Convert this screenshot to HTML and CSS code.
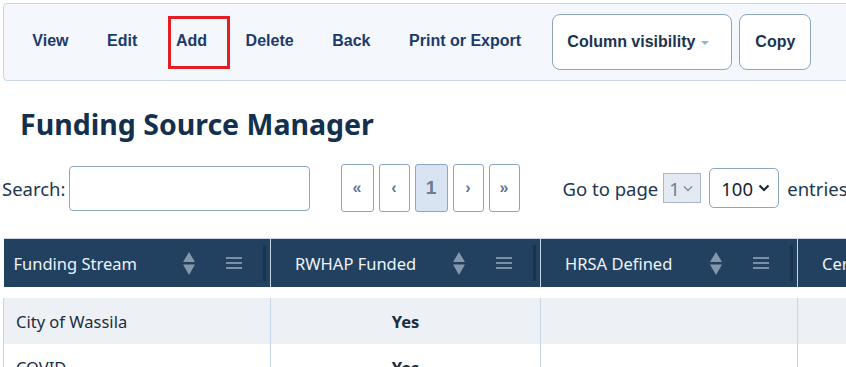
FILE: index.html
```html
<!DOCTYPE html>
<html lang="en">
<head>
    <meta charset="UTF-8">
    <meta name="viewport" content="width=device-width, initial-scale=1.0">
    <title>Funding Source Manager</title>
    <link rel="stylesheet" href="styles.css">
</head>
<body>
    <div class="page">
        <div class="toolbar">
            <button class="tool-button">View</button>
            <button class="tool-button">Edit</button>
            <button class="tool-button add-button">Add<span class="highlight"></span></button>
            <button class="tool-button">Delete</button>
            <button class="tool-button">Back</button>
            <button class="tool-button">Print or Export</button>
            <button class="box-button colvis-button">Column visibility <span class="caret"></span></button>
            <button class="box-button copy-button">Copy</button>
        </div>

        <h1 class="page-title">Funding Source Manager</h1>

        <div class="controls">
            <label class="search-label">Search:</label>
            <input class="search-input" type="text">
            <div class="pager">
                <span class="page-btn wide">&laquo;</span>
                <span class="page-btn">&lsaquo;</span>
                <span class="page-btn wide active">1</span>
                <span class="page-btn">&rsaquo;</span>
                <span class="page-btn">&raquo;</span>
            </div>
            <span class="goto-label">Go to page</span>
            <div class="mini-select">1
                <svg width="10" height="7" viewBox="0 0 10 7"><path d="M1 1.5 L5 5.5 L9 1.5" fill="none" stroke="#7a8ca0" stroke-width="1.4"/></svg>
            </div>
            <div class="length-select">100
                <svg width="12" height="8" viewBox="0 0 12 8"><path d="M1.5 1.5 L6 6 L10.5 1.5" fill="none" stroke="#1b2733" stroke-width="2.2"/></svg>
            </div>
            <span class="entries-label">entries</span>
        </div>

        <table class="data-table">
            <colgroup>
                <col style="width:267px">
                <col style="width:270px">
                <col style="width:257px">
                <col style="width:300px">
            </colgroup>
            <thead>
                <tr>
                    <th class="first">
                        <div class="th-inner">
                            <span class="th-text">Funding Stream</span>
                            <svg class="sort-icon" width="12" height="23" viewBox="0 0 12 23"><path d="M6 0 L12 10 L0 10 Z M0 12.5 L12 12.5 L6 23 Z" fill="#8797ab"/></svg>
                            <svg class="menu-icon" width="16" height="12" viewBox="0 0 16 12"><path d="M0 1 H16 M0 6 H16 M0 11 H16" stroke="#7d8fa4" stroke-width="2"/></svg>
                            <span class="resizer"></span>
                        </div>
                    </th>
                    <th>
                        <div class="th-inner">
                            <span class="th-text">RWHAP Funded</span>
                            <svg class="sort-icon" width="12" height="23" viewBox="0 0 12 23"><path d="M6 0 L12 10 L0 10 Z M0 12.5 L12 12.5 L6 23 Z" fill="#8797ab"/></svg>
                            <svg class="menu-icon" width="16" height="12" viewBox="0 0 16 12"><path d="M0 1 H16 M0 6 H16 M0 11 H16" stroke="#7d8fa4" stroke-width="2"/></svg>
                            <span class="resizer"></span>
                        </div>
                    </th>
                    <th>
                        <div class="th-inner">
                            <span class="th-text">HRSA Defined</span>
                            <svg class="sort-icon" width="12" height="23" viewBox="0 0 12 23"><path d="M6 0 L12 10 L0 10 Z M0 12.5 L12 12.5 L6 23 Z" fill="#8797ab"/></svg>
                            <svg class="menu-icon" width="16" height="12" viewBox="0 0 16 12"><path d="M0 1 H16 M0 6 H16 M0 11 H16" stroke="#7d8fa4" stroke-width="2"/></svg>
                            <span class="resizer"></span>
                        </div>
                    </th>
                    <th>
                        <div class="th-inner">
                            <span class="th-text">Certified</span>
                        </div>
                    </th>
                </tr>
            </thead>
            <tbody>
                <tr class="gap-row"><td colspan="4"></td></tr>
                <tr class="odd">
                    <td>City of Wassila</td>
                    <td class="center bold">Yes</td>
                    <td></td>
                    <td></td>
                </tr>
                <tr>
                    <td>COVID</td>
                    <td class="center bold">Yes</td>
                    <td></td>
                    <td></td>
                </tr>
            </tbody>
        </table>
    </div>
</body>
</html>
```

FILE: styles.css
```css
html, body {
    margin: 0;
    overflow: hidden;
    background: #ffffff;
}
body {
    font-family: "Noto Sans", "Open Sans", sans-serif;
    font-size: 16px;
    color: #1f3550;
}
.page {
    padding: 3px 0 0 3px;
    width: 1200px;
}

/* toolbar */
.toolbar {
    display: flex;
    align-items: stretch;
    height: 56px;
    padding: 10px 9px;
    background-color: #f4f7fc;
    border: 1px solid #c8d5e6;
    border-radius: 4px;
}
.tool-button {
    position: relative;
    background: none;
    border: none;
    padding: 0 19.3px 2px;
    font-family: "Liberation Sans", Arial, sans-serif;
    font-weight: bold;
    font-size: 16px;
    color: #1d3a6b;
    cursor: pointer;
}
.highlight {
    position: absolute;
    left: 11px;
    top: 2px;
    width: 62px;
    height: 53px;
    box-sizing: border-box;
    border: 3px solid #e41e25;
}
.box-button {
    background-color: #ffffff;
    border: 1px solid #8ea5c0;
    border-radius: 8px;
    font-family: "Liberation Sans", Arial, sans-serif;
    font-weight: bold;
    font-size: 16px;
    color: #1b3350;
    cursor: pointer;
}
.colvis-button {
    margin-left: 12px;
    width: 180px;
    padding: 0 0 0 14px;
    text-align: left;
}
.caret {
    display: inline-block;
    margin-left: 1px;
    vertical-align: middle;
    border-left: 4px solid transparent;
    border-right: 4px solid transparent;
    border-top: 4px solid #8fb1d2;
}
.copy-button {
    margin-left: 7px;
    width: 72px;
    padding: 0;
}

/* title */
.page-title {
    margin: 25px 0 0 17px;
    font-size: 28.5px;
    line-height: 36px;
    font-weight: bold;
    color: #13304e;
}

/* search + paging */
.controls {
    display: flex;
    align-items: center;
    height: 48px;
    margin-top: 22px;
    margin-left: -1px;
    font-size: 18.5px;
}
.search-label {
    color: #20364f;
}
.search-input {
    width: 241px;
    height: 45px;
    margin-left: 3px;
    box-sizing: border-box;
    border: 1px solid #8fa7c1;
    border-radius: 4px;
}
.pager {
    display: flex;
    gap: 5px;
    margin-left: 31px;
}
.page-btn {
    display: flex;
    align-items: center;
    justify-content: center;
    width: 31px;
    height: 48px;
    box-sizing: border-box;
    border: 1px solid #8ea5c0;
    border-radius: 3px;
    font-family: "Liberation Sans", Arial, sans-serif;
    font-weight: bold;
    font-size: 16px;
    color: #5c7796;
}
.page-btn.wide {
    width: 33px;
}
.page-btn.active {
    background-color: #d8e4f1;
    color: #6a7d93;
    font-size: 19px;
}
.goto-label {
    margin-left: 43px;
    color: #20364f;
}
.mini-select {
    display: flex;
    align-items: center;
    gap: 3px;
    margin-left: 5px;
    width: 38px;
    height: 30px;
    box-sizing: border-box;
    padding-left: 5px;
    background-color: #e4eaf2;
    border: 1px solid #a9b8c8;
    color: #6d7f95;
}
.length-select {
    display: flex;
    align-items: center;
    justify-content: space-between;
    margin-left: 8px;
    width: 70px;
    height: 40px;
    box-sizing: border-box;
    padding: 0 8px 0 11px;
    border: 1px solid #8ea5c0;
    border-radius: 5px;
    color: #17232f;
}
.entries-label {
    margin-left: 8px;
    color: #20364f;
}

/* table */
.data-table {
    margin-top: 26px;
    border-collapse: collapse;
    table-layout: fixed;
    width: 1094px;
    font-size: 16.5px;
}
.data-table th {
    padding: 0;
    background-color: #22405f;
    border-top: 1px solid #c7d6e6;
    border-left: 1px solid #c7d6e6;
    font-weight: normal;
    text-align: left;
    color: #eef3f8;
}
.data-table th.first {
    border-left: none;
}
.th-inner {
    display: flex;
    align-items: center;
    height: 48px;
    padding-left: 24px;
}
.first .th-inner {
    padding-left: 10px;
}
.th-text {
    flex: 1;
    white-space: nowrap;
}
.sort-icon {
    margin-right: 31px;
}
.resizer {
    width: 3px;
    height: 36px;
    margin: 0 4px 0 21px;
    background-color: #1a3450;
}
.data-table td {
    height: 46px;
    padding: 0 12px;
    box-sizing: border-box;
    border-left: 1px solid #c5d6e8;
    color: #1c2d3e;
}
.data-table .gap-row td {
    height: 11px;
    padding: 0;
    border: none;
}
.data-table tr.odd td {
    background-color: #edf1f6;
}
.center {
    text-align: center;
}
.bold {
    font-weight: bold;
}
```
